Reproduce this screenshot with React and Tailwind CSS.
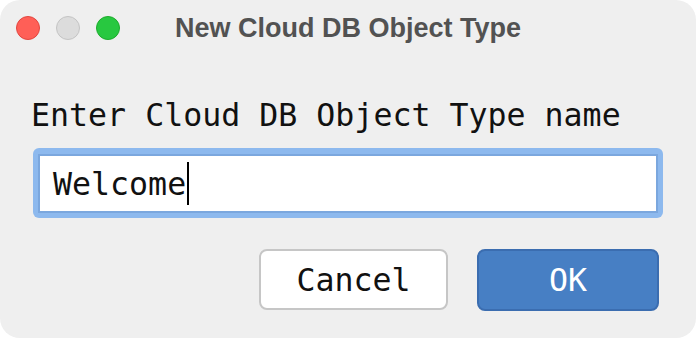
import React, { useState } from "react";

const mono = { fontFamily: '"DejaVu Sans Mono", "Liberation Mono", monospace' };

const TrafficLights = () => (
  <div className="flex items-center gap-[16px] pl-[16px]">
    <span className="block w-[24px] h-[24px] rounded-full bg-[#ff5f57] border border-[#e2463f]" />
    <span className="block w-[24px] h-[24px] rounded-full bg-[#dcdcdc] border border-[#c4c4c4]" />
    <span className="block w-[24px] h-[24px] rounded-full bg-[#28c840] border border-[#1dac2c]" />
  </div>
);

const App = () => {
  const [name] = useState("Welcome");

  return (
    <div className="w-[696px] h-[338px] bg-white">
      <div className="w-full h-full rounded-[20px] bg-[#efefef] flex flex-col">
        <div className="h-[56px] grid grid-cols-[1fr_auto_1fr] items-center">
          <TrafficLights />
          <h1
            className="text-[27px] leading-[32px] font-bold text-[#525252]"
            style={{ fontFamily: '"Liberation Sans", Arial, sans-serif' }}
          >
            New Cloud DB Object Type
          </h1>
          <div />
        </div>

        <div className="px-[33px] flex flex-col" style={mono}>
          <label className="mt-[39px] text-[31.6px] leading-[40px] text-[#111] -ml-[2px]">
            Enter Cloud DB Object Type name
          </label>

          <div className="mt-[13px] w-[630px] h-[70px] rounded-[6px] bg-[#8db9ee] p-[5px] pt-[6px]">
            <div className="w-full h-full bg-white border-[2px] border-[#7ba7de] flex items-center pl-[13px]">
              <span className="text-[31.6px] leading-[40px] text-[#111]">{name}</span>
              <span className="block w-[2px] h-[43px] bg-black ml-[1px]" />
            </div>
          </div>

          <div className="mt-[31px] flex justify-end gap-[29px] pr-[4px]">
            <button className="w-[189px] h-[61px] rounded-[8px] bg-white border-[2px] border-[#c6c6c6] text-[31.6px] leading-[40px] text-[#111]">
              Cancel
            </button>
            <button className="w-[182px] h-[62px] rounded-[8px] bg-[#477fc4] border-[2px] border-[#3b6db0] text-[31.6px] leading-[40px] text-white">
              OK
            </button>
          </div>
        </div>
      </div>
    </div>
  );
};

export default App;
